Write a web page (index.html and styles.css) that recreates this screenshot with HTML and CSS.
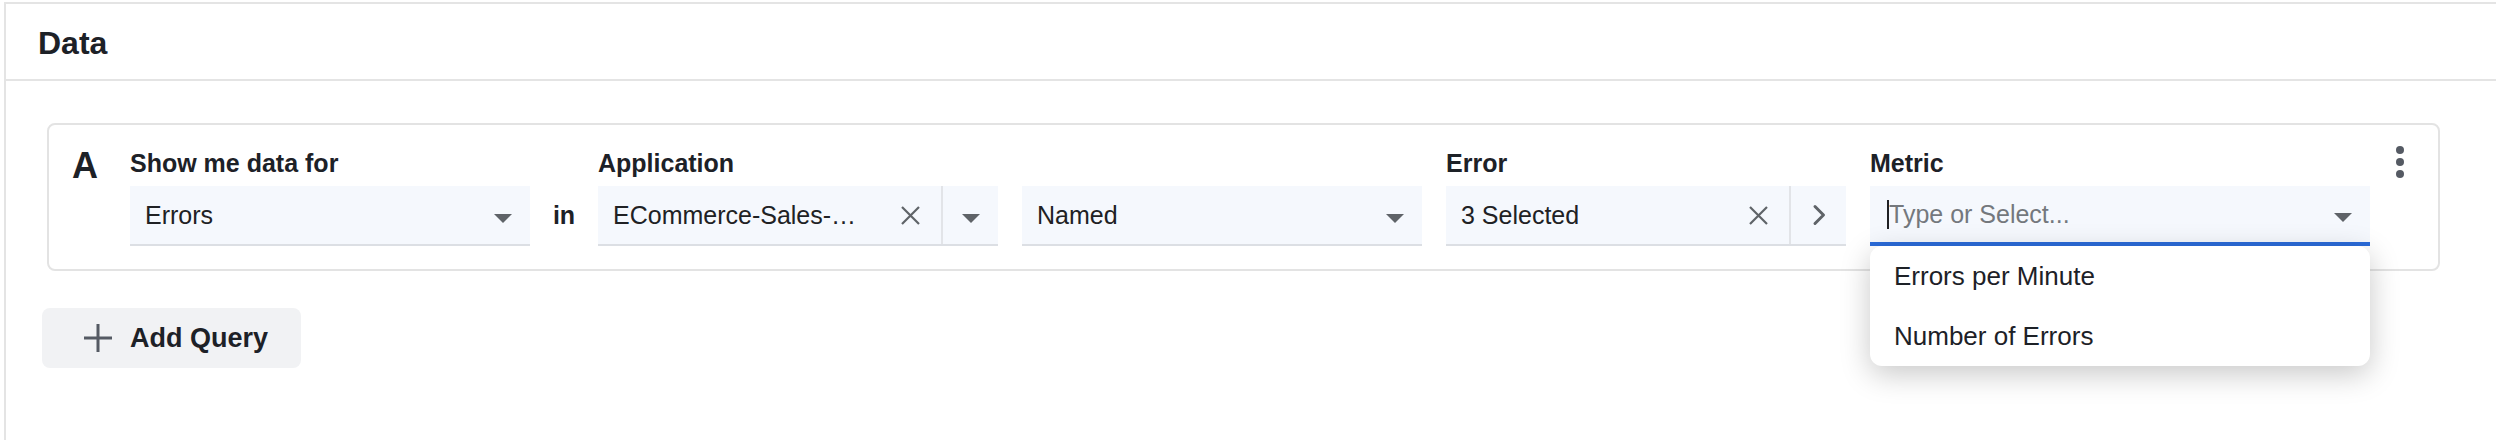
FILE: index.html
```html
<!DOCTYPE html>
<html lang="en">
<head>
<meta charset="utf-8">
<title>Data</title>
<link rel="stylesheet" href="styles.css">
</head>
<body>
<div class="panel">
  <div class="panel-header">
    <h2 class="panel-title">Data</h2>
  </div>
  <div class="panel-body">
    <div class="query-card">
      <div class="query-letter">A</div>
      <div class="query-fields">
        <div class="field">
          <div class="field-label">Show me data for</div>
          <div class="select">
            <span class="select-value">Errors</span>
            <svg class="select-arrow" width="18" height="9" viewBox="0 0 18 9"><polygon points="0,0 18,0 9,9" fill="#5f6368"/></svg>
          </div>
        </div>
        <div class="connector">in</div>
        <div class="field">
          <div class="field-label">Application</div>
          <div class="select">
            <span class="select-value">ECommerce-Sales-…</span>
            <svg class="select-clear" width="19" height="19" viewBox="0 0 19 19"><path d="M1 1 L18 18 M18 1 L1 18" stroke="#5f6368" stroke-width="2.2" fill="none"/></svg>
            <span class="select-divider"></span>
            <span class="select-toggle">
              <svg class="toggle-arrow" width="18" height="9" viewBox="0 0 18 9"><polygon points="0,0 18,0 9,9" fill="#5f6368"/></svg>
            </span>
          </div>
        </div>
        <div class="field">
          <div class="field-label"></div>
          <div class="select">
            <span class="select-value">Named</span>
            <svg class="select-arrow" width="18" height="9" viewBox="0 0 18 9"><polygon points="0,0 18,0 9,9" fill="#5f6368"/></svg>
          </div>
        </div>
        <div class="field">
          <div class="field-label">Error</div>
          <div class="select">
            <span class="select-value">3 Selected</span>
            <svg class="select-clear" width="19" height="19" viewBox="0 0 19 19"><path d="M1 1 L18 18 M18 1 L1 18" stroke="#5f6368" stroke-width="2.2" fill="none"/></svg>
            <span class="select-divider"></span>
            <span class="select-toggle">
              <svg width="14" height="22" viewBox="0 0 14 22"><polyline points="3,2.5 11.5,11 3,19.5" stroke="#5f6368" stroke-width="3" fill="none" stroke-linecap="round" stroke-linejoin="round"/></svg>
            </span>
          </div>
        </div>
        <div class="field field-wide">
          <div class="field-label">Metric</div>
          <div class="select is-focused">
            <span class="caret"></span>
            <span class="select-placeholder">Type or Select...</span>
            <svg class="select-arrow" width="18" height="9" viewBox="0 0 18 9"><polygon points="0,0 18,0 9,9" fill="#5f6368"/></svg>
            <div class="menu">
              <div class="menu-item">Errors per Minute</div>
              <div class="menu-item">Number of Errors</div>
            </div>
          </div>
        </div>
      </div>
      <div class="kebab"><span></span><span></span><span></span></div>
    </div>
    <button class="add-query" type="button">
      <svg width="28" height="28" viewBox="0 0 28 28"><path d="M14 0 V28 M0 14 H28" stroke="#555a63" stroke-width="3" fill="none"/></svg>
      <span>Add Query</span>
    </button>
  </div>
</div>
</body>
</html>
```
FILE: styles.css
```css
* {
  box-sizing: border-box;
}

html,
body {
  height: 100%;
}

body {
  margin: 0;
  font-family: "Liberation Sans", Arial, sans-serif;
  color: #1f2328;
  background: #ffffff;
  overflow: hidden;
}

.panel {
  margin: 2px 0 0 4px;
  border: 2px solid #e4e4e4;
  border-right: 0;
  border-bottom: 0;
  height: calc(100% - 2px);
}

.panel-header {
  height: 77px;
  padding: 3px 0 0 32px;
  border-bottom: 2px solid #e4e4e4;
  display: flex;
  align-items: center;
}

.panel-title {
  margin: 0;
  font-size: 32px;
  font-weight: 700;
  line-height: 38px;
  color: #1d2127;
}

.panel-body {
  padding: 42px 0 0 36px;
}

.query-card {
  width: 2393px;
  margin-left: 5px;
  border: 2px solid #e3e3e3;
  border-radius: 8px;
  display: flex;
  align-items: flex-start;
  padding: 23px 34px 23px 23px;
}

.query-letter {
  width: 58px;
  flex-shrink: 0;
  font-size: 36px;
  font-weight: 700;
  line-height: 36px;
  color: #1d2127;
}

.query-fields {
  display: flex;
  align-items: flex-end;
  gap: 24px;
}

.field {
  width: 400px;
  display: flex;
  flex-direction: column;
  gap: 8px;
}

.field-wide {
  width: 500px;
}

.field-label {
  height: 30px;
  font-size: 25px;
  font-weight: 700;
  line-height: 30px;
  white-space: nowrap;
  color: #1d2127;
}

.connector {
  width: 20px;
  height: 58px;
  margin-bottom: 2px;
  display: flex;
  align-items: center;
  justify-content: center;
  font-size: 25px;
  font-weight: 700;
  color: #1d2127;
}

.select {
  position: relative;
  height: 60px;
  display: flex;
  align-items: center;
  background: #f5f8fd;
  border-bottom: 2px solid #dcdfe4;
}

.select-value {
  flex: 1;
  min-width: 0;
  padding-left: 15px;
  font-size: 25px;
  line-height: 30px;
  white-space: nowrap;
  overflow: hidden;
  color: #202124;
}

.select-arrow {
  flex-shrink: 0;
  margin-right: 18px;
  margin-top: 7px;
}

.select-clear {
  flex-shrink: 0;
  margin-right: 21px;
}

.select-divider {
  width: 2px;
  align-self: stretch;
  background: #e2e4e8;
}

.select-toggle {
  width: 55px;
  align-self: stretch;
  display: flex;
  align-items: center;
  justify-content: center;
}

.toggle-arrow {
  margin-top: 7px;
}

.select.is-focused {
  border-bottom: 4px solid #2b6bd9;
}

.caret {
  width: 2px;
  height: 29px;
  margin-left: 17px;
  background: #202124;
  flex-shrink: 0;
}

.select-placeholder {
  flex: 1;
  font-size: 25px;
  line-height: 30px;
  color: #74787d;
  white-space: nowrap;
}

.menu {
  position: absolute;
  top: calc(100% + 4px);
  left: 0;
  width: 100%;
  background: #ffffff;
  border-radius: 12px;
  box-shadow: 0 8px 30px rgba(0, 0, 0, 0.22);
  z-index: 5;
}

.menu-item {
  height: 60px;
  display: flex;
  align-items: center;
  padding-left: 24px;
  font-size: 26px;
  color: #1d2127;
}

.kebab {
  margin-left: auto;
  margin-top: -2px;
  display: flex;
  flex-direction: column;
  gap: 4px;
}

.kebab span {
  width: 8px;
  height: 8px;
  border-radius: 50%;
  background: #555a63;
}

.add-query {
  margin-top: 37px;
  height: 60px;
  display: inline-flex;
  align-items: center;
  gap: 18px;
  padding: 0 33px 0 42px;
  background: #f1f2f4;
  border: 0;
  border-radius: 8px;
  font-family: "Liberation Sans", Arial, sans-serif;
  font-size: 27px;
  font-weight: 700;
  color: #1d2127;
}
```
